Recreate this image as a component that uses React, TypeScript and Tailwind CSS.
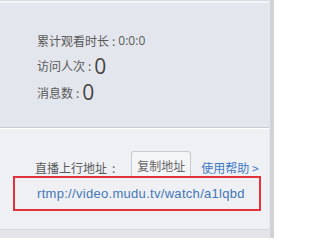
import React from 'react';

const font = { fontFamily: '"Noto Sans CJK SC", "Liberation Sans", sans-serif' };
const num = { fontFamily: '"Open Sans", "Liberation Sans", sans-serif' };

export default function App() {
  return (
    <div className="flex w-[274px] h-[238px] overflow-hidden bg-[#eceef2] text-[#595959]" style={font}>
      <div className="flex-1 flex flex-col border-r border-[#e6e8ec]">
        <div className="h-[3px] bg-[#f4f5f7] border-t border-[#d9dce0]" />
        <section className="h-[125px] bg-[#e3e6ec] border-b border-[#c9cdd3] pl-[37px] pt-[26px] flex flex-col">
          <div className="h-[24px] flex items-center text-[12px] leading-none">
            累计观看时长<span className="mx-[3px]">:</span><span style={num}>0:0:0</span>
          </div>
          <div className="h-[26px] flex items-center text-[12px] leading-none">
            访问人次<span className="mx-[3px]">:</span>
            <span className="text-[21px] leading-none text-[#444]" style={num}>0</span>
          </div>
          <div className="h-[27px] flex items-center text-[12px] leading-none">
            消息数<span className="mx-[3px]">:</span>
            <span className="text-[21px] leading-none text-[#444]" style={num}>0</span>
          </div>
        </section>
        <section className="flex-1 border-t border-white bg-[#eef0f3] pt-[22px] pl-[13px] pr-[5px] flex flex-col">
          <div className="flex items-end pl-[22px] h-[25px]">
            <span className="text-[12px] leading-none pb-[2px]">直播上行地址<span className="ml-[5px]">:</span></span>
            <button className="ml-[16px] w-[60px] h-[25px] rounded-t-[3px] border border-b-0 border-[#c8cbd0] bg-[#f4f5f7] text-[12px] text-[#666] leading-none pt-[3px]">
              复制地址
            </button>
            <span className="ml-[10px] text-[12px] leading-none text-[#3f78c4] pb-[2px]">使用帮助 &gt;</span>
          </div>
          <div className="w-[248px] h-[35px] border-2 border-[#e2333a] flex items-center pl-[22px] pt-[1px] text-[13px] tracking-[0.3px] text-[#4476b8]" style={{ fontFamily: '"Liberation Sans", sans-serif' }}>
            rtmp://video.mudu.tv/watch/a1lqbd
          </div>
        </section>
        <div className="h-[9px] border-t border-[#d3d6db] bg-[#e2e4e8]" />
      </div>
      <div className="w-[4px] bg-[#d0d2d6]" />
    </div>
  );
}
